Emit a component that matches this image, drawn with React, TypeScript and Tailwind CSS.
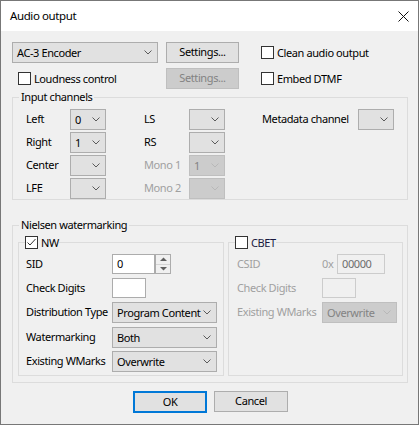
import React from "react";

function Chevron({ color }: { color: string }) {
  return (
    <svg width="8" height="5" viewBox="0 0 8 5" className="shrink-0">
      <path d="M0.5 0.5 L4 4 L7.5 0.5" fill="none" stroke={color} strokeWidth="1" />
    </svg>
  );
}

function Combo({ w, text, disabled }: { w: string; text?: string; disabled?: boolean }) {
  return (
    <div
      className={
        "flex h-[21px] shrink-0 items-center justify-between border pl-[4px] pr-[5px] " +
        w +
        (disabled ? " border-[#bfbfbf] bg-[#cccccc] text-[#838383]" : " border-[#adadad] bg-[#e1e1e1] text-black")
      }
    >
      <span className="whitespace-nowrap leading-[19px]">{text ?? ""}</span>
      <Chevron color={disabled ? "#b8b8b8" : "#5a5a5a"} />
    </div>
  );
}

function Button({ w, text, disabled, def }: { w: string; text: string; disabled?: boolean; def?: boolean }) {
  return (
    <div
      className={
        "flex shrink-0 items-center justify-center " +
        w +
        (def
          ? " h-[22px] border-2 border-[#0078d7] bg-[#e1e1e1] text-black"
          : disabled
          ? " h-[21px] border border-[#bfbfbf] bg-[#cccccc] text-[#838383]"
          : " h-[21px] border border-[#adadad] bg-[#e1e1e1] text-black")
      }
    >
      {text}
    </div>
  );
}

function Box({ checked }: { checked?: boolean }) {
  return (
    <span className="flex h-[13px] w-[13px] shrink-0 items-center justify-center border border-[#333333] bg-white">
      {checked && (
        <svg width="11" height="11" viewBox="0 0 11 11">
          <path d="M1.5 5.5 L4 8 L9.5 2" fill="none" stroke="#333333" strokeWidth="1" />
        </svg>
      )}
    </span>
  );
}

function Check({ label, checked, color }: { label: string; checked?: boolean; color?: string }) {
  return (
    <div className="flex items-center">
      <Box checked={checked} />
      <span className={"ml-[3px] whitespace-nowrap leading-[13px] " + (color ?? "text-black")}>{label}</span>
    </div>
  );
}

function Edit({ w, text, disabled }: { w: string; text?: string; disabled?: boolean }) {
  return (
    <div
      className={
        "flex h-[20px] shrink-0 items-center border pl-[4px] " +
        w +
        (disabled ? " border-[#cccccc] bg-[#f0f0f0] text-[#6d6d6d]" : " border-[#acacac] bg-white text-black")
      }
    >
      {text ?? ""}
    </div>
  );
}

function ChanRow({
  a,
  av,
  b,
  bv,
  bDisabled,
  meta,
}: {
  a: string;
  av?: string;
  b: string;
  bv?: string;
  bDisabled?: boolean;
  meta?: boolean;
}) {
  return (
    <div className="flex h-[21px] items-center">
      <span className="w-[44px] shrink-0">{a}</span>
      <Combo w="w-[36px]" text={av} />
      <span className={"ml-[38px] w-[45px] shrink-0 " + (bDisabled ? "text-[#a0a0a0]" : "")}>{b}</span>
      <Combo w="w-[36px]" text={bv} disabled={bDisabled} />
      {meta && (
        <>
          <span className="ml-[37px] w-[96px] shrink-0 whitespace-nowrap">Metadata channel</span>
          <Combo w="w-[36px]" />
        </>
      )}
    </div>
  );
}

export default function App() {
  return (
    <div className="flex h-[425px] w-[419px] flex-col overflow-hidden border border-[#777777] bg-[#f0f0f0] font-['Noto_Sans',sans-serif] text-[11px] tracking-[-0.4px] text-black">
      <div className="flex h-[30px] shrink-0 items-center justify-between bg-white pl-[9px] pr-[9px]">
        <span className="text-[11.5px] leading-[16px]">Audio output</span>
        <svg width="11" height="11" viewBox="0 0 11 11">
          <path d="M0.5 0.5 L10.5 10.5 M10.5 0.5 L0.5 10.5" stroke="#111111" strokeWidth="1" />
        </svg>
      </div>

      <div className="flex flex-1 flex-col pl-[11px] pt-[11px]">
        <div className="flex h-[21px] items-center">
          <div className="w-[154px] shrink-0">
            <Combo w="w-[146px]" text="AC-3 Encoder" />
          </div>
          <Button w="w-[73px]" text="Settings..." />
          <div className="ml-[22px]">
            <Check label="Clean audio output" />
          </div>
        </div>

        <div className="mt-[5px] flex h-[21px] items-center">
          <div className="w-[154px] shrink-0 pl-[6px]">
            <Check label="Loudness control" />
          </div>
          <Button w="w-[73px]" text="Settings..." disabled />
          <div className="ml-[22px]">
            <Check label="Embed DTMF" />
          </div>
        </div>

        <fieldset className="mt-[1px] h-[110px] w-[396px] border border-[#dcdcdc]">
          <legend className="ml-[6px] px-[2px] leading-[14px]">Input channels</legend>
          <div className="mt-[5px] flex flex-col gap-[2px] pl-[13px]">
            <ChanRow a="Left" av="0" b="LS" meta />
            <ChanRow a="Right" av="1" b="RS" />
            <ChanRow a="Center" b="Mono 1" bv="1" bDisabled />
            <ChanRow a="LFE" b="Mono 2" bDisabled />
          </div>
        </fieldset>

        <fieldset className="mt-[18px] h-[165px] w-[396px] border border-[#dcdcdc]">
          <legend className="ml-[6px] px-[2px] leading-[14px]">Nielsen watermarking</legend>
          <div className="mt-[4px] flex gap-[4px] pl-[5px]">
            <fieldset className="h-[140px] w-[206px] border border-[#dcdcdc]">
              <legend className="ml-[6px] h-[13px]">
                <Check label="NW" checked />
              </legend>
              <div className="mt-[5px] flex flex-col pl-[7px]">
                <div className="flex h-[20px] items-center">
                  <span className="w-[86px] shrink-0">SID</span>
                  <Edit w="w-[43px]" text="0" />
                  <div className="flex h-[20px] w-[16px] shrink-0 flex-col border border-[#acacac] bg-[#f0f0f0]">
                    <div className="flex flex-1 items-center justify-center border-b border-[#d4d4d4]">
                      <svg width="7" height="4" viewBox="0 0 7 4">
                        <path d="M0 4 L3.5 0.5 L7 4 Z" fill="#606060" />
                      </svg>
                    </div>
                    <div className="flex flex-1 items-center justify-center">
                      <svg width="7" height="4" viewBox="0 0 7 4">
                        <path d="M0 0 L3.5 3.5 L7 0 Z" fill="#606060" />
                      </svg>
                    </div>
                  </div>
                </div>
                <div className="mt-[4px] flex h-[20px] items-center">
                  <span className="w-[86px] shrink-0">Check Digits</span>
                  <Edit w="w-[34px]" />
                </div>
                <div className="mt-[4px] flex h-[21px] items-center">
                  <span className="w-[86px] shrink-0 whitespace-nowrap">Distribution Type</span>
                  <Combo w="w-[105px]" text="Program Content" />
                </div>
                <div className="mt-[4px] flex h-[21px] items-center">
                  <span className="w-[86px] shrink-0">Watermarking</span>
                  <Combo w="w-[105px]" text="Both" />
                </div>
                <div className="mt-[3px] flex h-[21px] items-center">
                  <span className="w-[86px] shrink-0 whitespace-nowrap">Existing WMarks</span>
                  <Combo w="w-[105px]" text="Overwrite" />
                </div>
              </div>
            </fieldset>

            <fieldset className="h-[140px] w-[175px] border border-[#dcdcdc]">
              <legend className="ml-[6px] h-[13px]">
                <Check label="CBET" color="text-[#1a1a40]" />
              </legend>
              <div className="mt-[5px] flex flex-col pl-[8px] text-[#a0a0a0]">
                <div className="flex h-[20px] items-center">
                  <span className="w-[85px] shrink-0">CSID</span>
                  <span className="w-[15px] shrink-0">0x</span>
                  <Edit w="w-[48px]" text="00000" disabled />
                </div>
                <div className="mt-[4px] flex h-[20px] items-center">
                  <span className="w-[85px] shrink-0">Check Digits</span>
                  <Edit w="w-[34px]" disabled />
                </div>
                <div className="mt-[4px] flex h-[21px] items-center">
                  <span className="w-[85px] shrink-0 whitespace-nowrap">Existing WMarks</span>
                  <Combo w="w-[75px]" text="Overwrite" disabled />
                </div>
              </div>
            </fieldset>
          </div>
        </fieldset>

        <div className="ml-[121px] mt-[8px] flex gap-[7px]">
          <Button w="w-[74px]" text="OK" def />
          <Button w="w-[74px]" text="Cancel" />
        </div>
      </div>
    </div>
  );
}
